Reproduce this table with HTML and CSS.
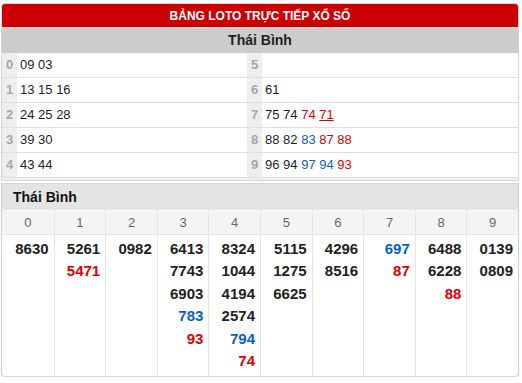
FILE: index.html
```html
<!DOCTYPE html>
<html lang="vi">
<head>
<meta charset="utf-8">
<link rel="stylesheet" href="styles.css">
</head>
<body>
<div class="page">
  <div class="loto">
    <div class="loto-title">BẢNG LOTO TRỰC TIẾP XỔ SỐ</div>
    <div class="loto-prov">Thái Bình</div>
    <div class="loto-grid">
      <div class="idx">0</div><div class="nums">09 03</div><div class="idx">5</div><div class="nums"></div>
      <div class="idx">1</div><div class="nums">13 15 16</div><div class="idx">6</div><div class="nums">61</div>
      <div class="idx">2</div><div class="nums">24 25 28</div><div class="idx">7</div><div class="nums">75 74 <span class="r">74</span> <span class="r u">71</span></div>
      <div class="idx">3</div><div class="nums">39 30</div><div class="idx">8</div><div class="nums">88 82 <span class="b">83</span> <span class="r">87</span> <span class="r">88</span></div>
      <div class="idx last">4</div><div class="nums last">43 44</div><div class="idx last">9</div><div class="nums last">96 94 <span class="b">97</span> <span class="b">94</span> <span class="r">93</span></div>
    </div>
  </div>
  <div class="box">
    <div class="box-title">Thái Bình</div>
    <div class="cols">
      <div class="col"><div class="hd">0</div><div class="vals"><div>8630</div></div></div>
      <div class="col"><div class="hd">1</div><div class="vals"><div>5261</div><div class="r">5471</div></div></div>
      <div class="col"><div class="hd">2</div><div class="vals"><div>0982</div></div></div>
      <div class="col"><div class="hd">3</div><div class="vals"><div>6413</div><div>7743</div><div>6903</div><div class="b">783</div><div class="r">93</div></div></div>
      <div class="col"><div class="hd">4</div><div class="vals"><div>8324</div><div>1044</div><div>4194</div><div>2574</div><div class="b">794</div><div class="r">74</div></div></div>
      <div class="col"><div class="hd">5</div><div class="vals"><div>5115</div><div>1275</div><div>6625</div></div></div>
      <div class="col"><div class="hd">6</div><div class="vals"><div>4296</div><div>8516</div></div></div>
      <div class="col"><div class="hd">7</div><div class="vals"><div class="b">697</div><div class="r">87</div></div></div>
      <div class="col"><div class="hd">8</div><div class="vals"><div>6488</div><div>6228</div><div class="r">88</div></div></div>
      <div class="col"><div class="hd">9</div><div class="vals"><div>0139</div><div>0809</div></div></div>
    </div>
  </div>
</div>
</body>
</html>
```

FILE: styles.css
```css
* { box-sizing: border-box; }
html, body { margin: 0; padding: 0; background: #fff; }
body { font-family: "Liberation Sans", Arial, sans-serif; color: #222; }
.page { width: 519px; padding: 3px 0 0 1px; }

.loto {
  border: 1px solid #d4d4d4;
  border-radius: 4px 4px 0 0;
  overflow: hidden;
  background: #f2f2f2;
  padding-bottom: 2px;
}
.loto-title {
  height: 24px;
  background: #cc0000;
  color: #fff;
  font-weight: bold;
  font-size: 12px;
  line-height: 24px;
  text-align: center;
  border-bottom: 1px solid #e0e0e0;
}
.loto-prov {
  height: 25px;
  background: #cccccc;
  font-weight: bold;
  font-size: 14px;
  line-height: 25px;
  text-align: center;
  color: #222;
}
.loto-grid {
  display: grid;
  grid-template-columns: 15px 230px 15px 1fr;
  background: #fff;
}
.loto-grid > div {
  height: 25px;
  line-height: 24px;
  border-bottom: 1px solid #dedede;
  font-size: 13px;
}
.idx {
  background: #eeeeee;
  color: #a6a6a6;
  font-weight: bold;
  text-align: center;
}
.nums { padding-left: 3px; color: #1e1e1e; }
.r { color: #e00000; }
.b { color: #0a5fc8; }
.u { text-decoration: underline; }

.box {
  margin-top: 2px;
  border: 1px solid #d0d0d0;
  border-top: 1px solid #e0d6c6;
  border-radius: 0 0 4px 4px;
  box-shadow: 0 1px 1px #d8d8d8;
  overflow: hidden;
}
.box-title {
  height: 26px;
  background: #e4e4e4;
  font-weight: bold;
  font-size: 14px;
  line-height: 26px;
  padding-left: 11px;
  color: #111;
}
.cols { display: grid; grid-template-columns: repeat(10, 1fr); }
.col { border-left: 1px solid #e6e6e6; }
.col:first-child { border-left: none; }
.hd {
  height: 25px;
  line-height: 24px;
  background: #f4f4f4;
  border-bottom: 1px solid #e2e2e2;
  border-top: 1px solid #ffffff;
  text-align: center;
  color: #66676e;
  font-size: 13px;
}
.vals {
  height: 141px;
  padding: 3px 5px 0 0;
  text-align: right;
  font-weight: bold;
  font-size: 15px;
  line-height: 22.4px;
}
```
